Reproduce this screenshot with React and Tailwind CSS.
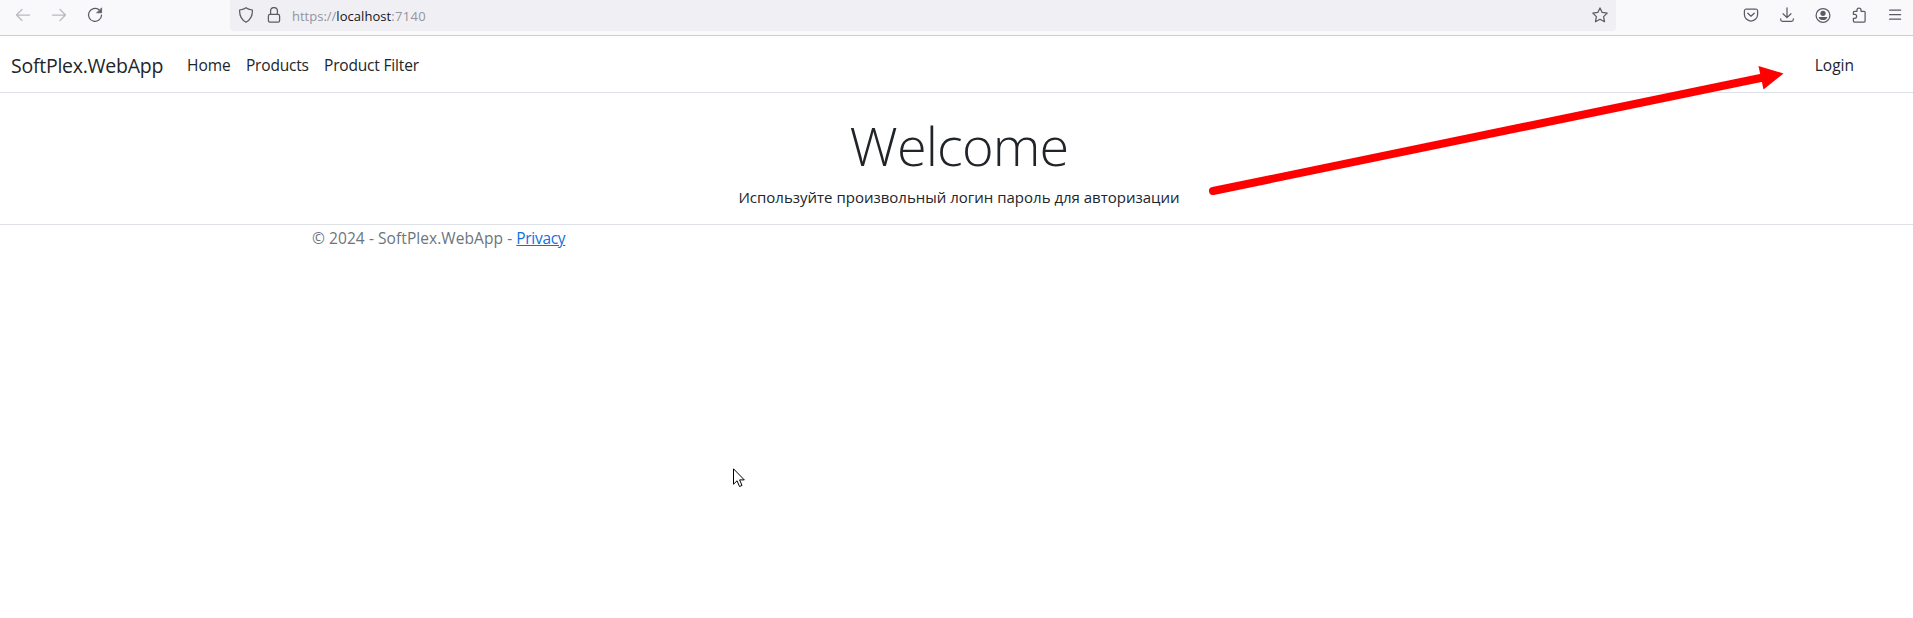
import React from 'react';

function Icon({ children, className = '' }) {
  return (
    <svg viewBox="0 0 16 16" fill="none" stroke="currentColor" strokeWidth="1.25" strokeLinecap="round" strokeLinejoin="round" className={`h-4 w-4 shrink-0 ${className}`}>
      {children}
    </svg>
  );
}

function BrowserBar() {
  return (
    <header className="flex h-9 border-b border-[#ccccd1] bg-[#f9f9fb] text-[#5b5b66]">
      <div className="flex w-[230px] shrink-0 gap-5 pt-[7px] pl-[15px]">
        <Icon className="text-[#b9b9c0]"><path d="M14.5 8H1.5M7 2.5L1.5 8L7 13.5" /></Icon>
        <Icon className="text-[#b9b9c0]"><path d="M1.5 8H14.5M9 2.5L14.5 8L9 13.5" /></Icon>
        <Icon>
          <path d="M11.8 2.6A6.5 6.5 0 1 0 14.5 8.2" />
          <path d="M14.6 1.2V5.8H10Z" fill="currentColor" strokeWidth="0.8" />
        </Icon>
      </div>
      <div className="flex h-[31px] flex-1 rounded-b bg-[#f0f0f4] pt-[7px] pl-2">
        <Icon><path d="M8 .8C9.6 2.2 12 2.7 14.4 3C14.6 8.5 13 12.6 8 15.2C3 12.6 1.4 8.5 1.6 3C4 2.7 6.4 2.2 8 .8Z" /></Icon>
        <Icon className="ml-3">
          <rect x="2.4" y="7.4" width="11.2" height="7.8" rx="1.6" />
          <path d="M4.6 7.2V4A3.4 3.4 0 0 1 11.4 4V7.2" />
        </Icon>
        <div className="ml-2.5 flex text-[13px] leading-[18px] text-[#94949e]">
          <span>https://</span>
          <span className="tracking-[0.05px] text-[#15141a]">localhost</span>
          <span className="tracking-[0.3px]">:7140</span>
        </div>
        <Icon className="mr-2 ml-auto">
          <path d="M8 .9L10.2 5.4L15.2 6.1L11.6 9.6L12.5 14.7L8 12.3L3.5 14.7L4.4 9.6L.8 6.1L5.8 5.4Z" />
        </Icon>
      </div>
      <div className="flex w-[297px] shrink-0 justify-end gap-5 pt-[7px] pr-2.5">
        <Icon>
          <path d="M3 2H13A1.8 1.8 0 0 1 14.6 3.7V7.4A6.6 6.6 0 0 1 1.4 7.4V3.7A1.8 1.8 0 0 1 3 2Z" />
          <path d="M4.8 6.2L8 9.2L11.2 6.2" />
        </Icon>
        <Icon><path d="M8 .8V10.4M4 6.8L8 10.6L12 6.8M1.7 11.8V12.6A1.8 1.8 0 0 0 3.5 14.4H12.5A1.8 1.8 0 0 0 14.3 12.6V11.8" /></Icon>
        <Icon>
          <circle cx="8" cy="8.4" r="6.9" />
          <circle cx="8" cy="6.3" r="2.6" fill="currentColor" stroke="none" />
          <path d="M3.6 9.9H12.4C11.8 12 10.1 13.1 8 13.1C5.9 13.1 4.2 12 3.6 9.9Z" fill="currentColor" stroke="none" />
        </Icon>
        <Icon>
          <path d="M2.4 7.2V5.3A1 1 0 0 1 3.4 4.3H6V3A2 2 0 0 1 10 3V4.3H13.1A1 1 0 0 1 14.1 5.3V14.1A1 1 0 0 1 13.1 15.1H3.4A1 1 0 0 1 2.4 14.1V11.3H3.7A1.9 1.9 0 0 0 3.7 7.4H2.4" />
        </Icon>
        <Icon><path d="M2.6 3.2H13.6M2.6 7.7H13.6M2.6 12.2H13.6" /></Icon>
      </div>
    </header>
  );
}

export default function App() {
  return (
    <div className="relative h-[618px] w-[1913px] overflow-hidden bg-white font-['Open_Sans','Segoe_UI',sans-serif] text-[#212529]">
      <BrowserBar />
      <nav className="flex h-[57px] items-center border-b border-[#dee2e6] pt-px pr-[59px] pl-[11px] text-[15.5px] leading-6 whitespace-nowrap">
        <a className="w-[176px] pt-0.5 text-[19.5px] leading-[30px] tracking-[-0.25px]">SoftPlex.WebApp</a>
        <a className="w-[59px]">Home</a>
        <a className="w-[78px] tracking-[-0.2px]">Products</a>
        <a className="tracking-[-0.18px]">Product Filter</a>
        <a className="ml-auto">Login</a>
      </nav>
      <main className="flex h-[132px] flex-col items-center border-b border-[#dee2e6] pt-[19px] whitespace-nowrap">
        <h1 className="h-[73px] pl-[5px] text-[54px] leading-[67px] font-light tracking-[-0.85px]">Welcome</h1>
        <p className="pl-[5px] text-[15px] leading-6">Используйте произвольный логин пароль для авторизации</p>
      </main>
      <footer className="flex pt-px pl-[312px] text-[15.5px] leading-6 whitespace-pre text-[#6c757d]">
        <span className="tracking-[0.07px]">© 2024 - SoftPlex.WebApp - </span>
        <a className="tracking-[-0.3px] text-[#1170dc] underline">Privacy</a>
      </footer>

      <svg viewBox="0 0 580 136" className="absolute top-[60px] left-[1207px] h-[136px] w-[580px]">
        <path d="M6 131L556 17.5" stroke="#ff0000" strokeWidth="8" strokeLinecap="round" />
        <path d="M551.5 6L576.5 13.5L556.5 29.5Z" fill="#ff0000" />
      </svg>
      <svg viewBox="0 0 12 20" className="absolute top-[468px] left-[733px] h-5 w-3">
        <path d="M.5 .8V16.2L4.1 12.8L6.5 18.5L9 17.4L6.6 11.9H11.3Z" fill="#fff" stroke="#000" strokeWidth="1" />
      </svg>
    </div>
  );
}
